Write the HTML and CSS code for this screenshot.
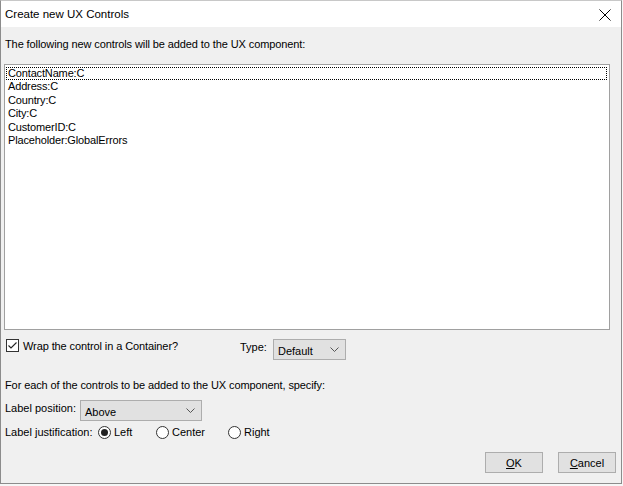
FILE: index.html
```html
<!DOCTYPE html>
<html>
<head>
<meta charset="utf-8">
<link rel="stylesheet" href="styles.css">
</head>
<body>
<div class="window">
  <div class="titlebar">
    <span class="title">Create new UX Controls</span>
    <svg class="close" width="12" height="12" viewBox="0 0 12 12"><path d="M0.5 0.5L11.5 11.5M11.5 0.5L0.5 11.5" stroke="#000" stroke-width="1"/></svg>
  </div>
  <div class="content">
    <div class="intro">The following new controls will be added to the UX component:</div>
    <div class="listbox">
      <div class="item focused">ContactName:C</div>
      <div class="item">Address:C</div>
      <div class="item">Country:C</div>
      <div class="item">City:C</div>
      <div class="item">CustomerID:C</div>
      <div class="item">Placeholder:GlobalErrors</div>
    </div>
    <div class="row wrap-row">
      <label class="check">
        <span class="checkbox"><svg width="11" height="11" viewBox="0 0 11 11"><path d="M1.5 5.5L4 8L9.5 2.5" fill="none" stroke="#222" stroke-width="1.1"/></svg></span>
        <span class="check-text">Wrap the control in a Container?</span>
      </label>
      <span class="type-label">Type:</span>
      <div class="select type-select"><span>Default</span><svg class="chev" width="9" height="5" viewBox="0 0 9 5"><path d="M0.5 0.5L4.5 4.5L8.5 0.5" fill="none" stroke="#555" stroke-width="1"/></svg></div>
    </div>
    <div class="specify">For each of the controls to be added to the UX component, specify:</div>
    <div class="row pos-row">
      <span class="pos-label">Label position:</span>
      <div class="select pos-select"><span>Above</span><svg class="chev" width="9" height="5" viewBox="0 0 9 5"><path d="M0.5 0.5L4.5 4.5L8.5 0.5" fill="none" stroke="#555" stroke-width="1"/></svg></div>
    </div>
    <div class="row just-row">
      <span class="just-label">Label justification:</span>
      <label class="radio r-left"><span class="dot checked"></span><span>Left</span></label>
      <label class="radio r-center"><span class="dot"></span><span>Center</span></label>
      <label class="radio r-right"><span class="dot"></span><span>Right</span></label>
    </div>
    <div class="buttons">
      <button class="btn"><u>O</u>K</button>
      <button class="btn btn-cancel"><u>C</u>ancel</button>
    </div>
  </div>
</div>
</body>
</html>
```
FILE: styles.css
```css
html, body {
  margin: 0;
  padding: 0;
  background: #f6f6f6;
  width: 623px;
  height: 486px;
  overflow: hidden;
}
.window {
  box-sizing: border-box;
  width: 622px;
  height: 484px;
  border: 1px solid #8c8c8c;
  border-top-color: #c8c8c8;
  background: #f0f0f0;
  font-family: "Liberation Sans", Arial, sans-serif;
  font-size: 11px;
  color: #000;
  display: flex;
  flex-direction: column;
}
.titlebar {
  height: 26px;
  background: #fff;
  display: flex;
  align-items: center;
  justify-content: space-between;
  padding: 0 10px 0 4px;
  flex: none;
}
.title {
  font-size: 11.5px;
}
.close {
  margin-top: 1px;
}
.content {
  flex: 1;
  display: flex;
  flex-direction: column;
  padding: 0 11px 0 3px;
}
.intro {
  margin-top: 10px;
  padding-left: 1px;
  height: 15px;
  line-height: 15px;
  letter-spacing: -0.1px;
}
.listbox {
  margin-top: 12px;
  height: 266px;
  flex: none;
  box-sizing: border-box;
  border: 1px solid #a0a0a0;
  background: #fff;
  padding: 2px 2px 0 1px;
  font-size: 11px;
  letter-spacing: -0.15px;
}
.item {
  height: 13.4px;
  line-height: 13px;
  padding-left: 2px;
  white-space: nowrap;
}
.item.focused {
  outline: 1px dotted #000;
  outline-offset: -1px;
}
.row {
  display: flex;
}
.wrap-row {
  margin-top: 9px;
  height: 23px;
  align-items: flex-start;
}
.check {
  display: flex;
  align-items: flex-start;
  gap: 4px;
  margin-left: 2px;
  width: 234px;
  flex: none;
}
.check-text {
  line-height: 15px;
  letter-spacing: -0.1px;
}
.checkbox {
  box-sizing: border-box;
  width: 13px;
  height: 13px;
  border: 1px solid #333;
  background: #fff;
  display: flex;
  align-items: center;
  justify-content: center;
  flex: none;
}
.type-label {
  width: 33px;
  line-height: 16px;
  flex: none;
}
.select {
  box-sizing: border-box;
  height: 21px;
  border: 1px solid #adadad;
  background: #e1e1e1;
  display: flex;
  align-items: center;
  justify-content: space-between;
  padding: 2px 6px 0 4px;
  flex: none;
}
.type-select {
  width: 73px;
}
.pos-select {
  width: 122px;
}
.chev {
  margin-top: -2px;
}
.specify {
  margin-top: 16px;
  padding-left: 1px;
  height: 15px;
  line-height: 15px;
  letter-spacing: -0.1px;
}
.pos-row {
  margin-top: 7px;
  height: 21px;
  align-items: flex-start;
}
.pos-label {
  box-sizing: border-box;
  width: 76px;
  padding-left: 1px;
  padding-top: 1px;
  line-height: 15px;
  flex: none;
}
.just-row {
  margin-top: 5px;
  height: 13px;
  align-items: center;
  line-height: 13px;
}
.just-label {
  box-sizing: border-box;
  width: 94px;
  padding-left: 1px;
  flex: none;
}
.radio {
  display: flex;
  align-items: center;
  gap: 3px;
  flex: none;
}
.r-left { width: 58px; }
.r-center { width: 72px; }
.dot {
  box-sizing: border-box;
  width: 13px;
  height: 13px;
  border: 1px solid #333;
  border-radius: 50%;
  background: #fff;
  display: flex;
  align-items: center;
  justify-content: center;
  flex: none;
}
.dot.checked::after {
  content: "";
  width: 7px;
  height: 7px;
  border-radius: 50%;
  background: #222;
}
.buttons {
  margin-top: 13px;
  display: flex;
  justify-content: flex-end;
  gap: 15px;
}
.btn {
  box-sizing: border-box;
  width: 58px;
  height: 21px;
  border: 1px solid #adadad;
  background: #e1e1e1;
  font-family: "Liberation Sans", Arial, sans-serif;
  font-size: 11px;
  color: #000;
  padding: 0;
  margin: 0;
}
.btn-cancel {
  margin-right: -6px;
}
```
